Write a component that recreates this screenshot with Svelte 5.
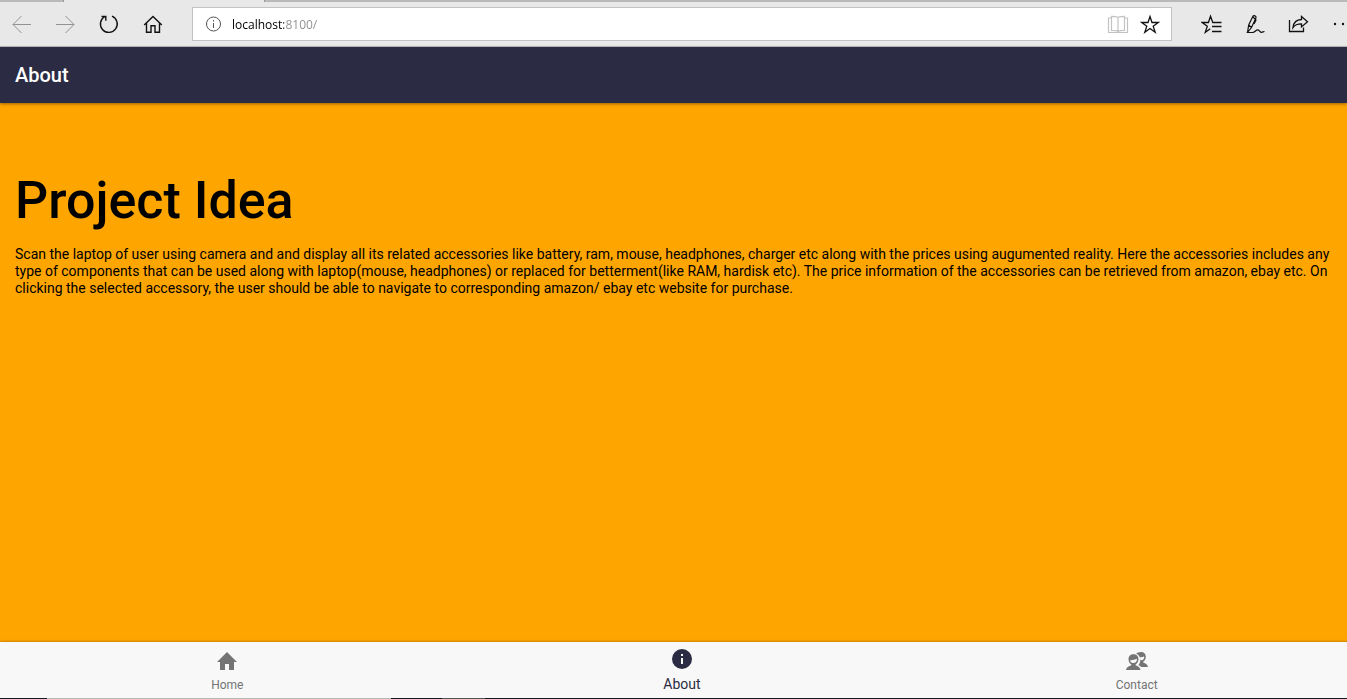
<script>
  let active = $state('About');
  let address = $state('localhost:8100/');
  const tabs = ['Home', 'About', 'Contact'];
</script>

<div class="window">
  <div class="tabstrip"><span class="inactive first"></span><span class="current"></span><span class="inactive rest"></span></div>
  <div class="toolbar">
    <nav class="controls" aria-label="Browser navigation">
      <button class="tool" aria-label="Back" disabled>
        <svg width="22" height="22" viewBox="0 0 22 22" stroke="#929292"><path d="M20 11.500H2M10.500 3 2 11.500 10.500 20" /></svg>
      </button>
      <button class="tool" aria-label="Forward" disabled>
        <svg width="22" height="22" viewBox="0 0 22 22" stroke="#929292"><path d="M1 11.500h18M10.500 3 19 11.500 10.500 20" /></svg>
      </button>
      <button class="tool" aria-label="Refresh">
        <svg width="22" height="22" viewBox="0 0 22 22" stroke="#111" stroke-width="1.400"><path d="M13 3.200a8.400 8.400 0 1 1-7 .3M2.500 3.500h4.300v4.300" /></svg>
      </button>
      <button class="tool" aria-label="Home page">
        <svg width="22" height="22" viewBox="0 0 22 22" stroke="#111" stroke-width="1.400"><path d="m1.200 12 8.800-8.500 8.800 8.500M3.500 10v9.300H8v-6.500h4v6.500h4.500V10" /></svg>
      </button>
    </nav>

    <div class="address">
      <svg width="16" height="16" viewBox="0 0 16 16" stroke="#555"><circle cx="7.500" cy="8" r="7" /><path d="M7.500 7v5M7.500 4v1.500" /></svg>
      <input aria-label="Address" bind:value={address} spellcheck="false" />
      <button class="mini" aria-label="Reading view" disabled>
        <svg width="22" height="22" viewBox="0 0 22 22" stroke="#c3c3c3" stroke-width="1.200"><path d="M11 4.500C9.500 3.300 7 3.300 4.500 3.300v14c2.500 0 5 0 6.500 1.200 1.500-1.200 4-1.200 6.500-1.200v-14c-2.500 0-5 0-6.500 1.200zm0 0v14M4.500 5h-3v14.500h19V5h-3" /></svg>
      </button>
      <button class="mini" aria-label="Add to favorites">
        <svg width="22" height="22" viewBox="0 0 22 22" stroke="#111" stroke-width="1.300"><path d="m11 3.500 2 6h6.300l-5.100 3.700 2 6.100-5.200-3.800-5.200 3.800 2-6.100-5.100-3.700H9z" /></svg>
      </button>
    </div>

    <div class="actions">
      <button class="tool" aria-label="Favorites hub">
        <svg width="22" height="22" viewBox="0 0 22 22" stroke="#111" stroke-width="1.300"><path d="M13 9.500h-1.200L9.500 3.300 7.400 9.500H1.200l5.100 3.800-2 6 5-3.500M12 9.500h8.500M11 13.500h9.500M11 18.500h9.500" /></svg>
      </button>
      <button class="tool" aria-label="Make a web note">
        <svg width="22" height="22" viewBox="0 0 22 22" stroke="#111" stroke-width="1.200"><path d="M3.500 19.500 4.700 12 8.700 3.700c1-2 4-.6 3.200 1.400L7.500 14.500 3.500 19.500h5c2.800 0 3.200-3 5.500-2.700 1.800.3 1.500 2.500 3.600 2.500 1.300 0 1.600-.8 2.900-.8M4.700 12 7.500 14.500M9 4l3 3-2 4" /></svg>
      </button>
      <button class="tool" aria-label="Share">
        <svg width="22" height="22" viewBox="0 0 22 22" stroke="#111" stroke-width="1.300"><path d="M2.500 7v11.500h14v-4M14.500 3.500l6 5.200-6 5.200v-3c-4 0-6.500.8-8.500 3.600.5-4.700 3.500-7.800 8.500-8z" /></svg>
      </button>
      <button class="tool" aria-label="More">
        <svg width="22" height="22" viewBox="0 0 22 22"><g fill="#111"><circle cx="5" cy="11" r="1.200" /><circle cx="13" cy="11" r="1.200" /><circle cx="21" cy="11" r="1.200" /></g></svg>
      </button>
    </div>
  </div>

  <header><h2>About</h2></header>

  <main>
    <h1>Project Idea</h1>
    <p>Scan the laptop of user using camera and and display all its related accessories like battery, ram, mouse, headphones, charger etc along with the prices using augumented reality. Here the accessories includes any type of components that can be used along with laptop(mouse, headphones) or replaced for betterment(like RAM, hardisk etc). The price information of the accessories can be retrieved from amazon, ebay etc. On clicking the selected accessory, the user should be able to navigate to corresponding amazon/ ebay etc website for purchase.</p>
  </main>

  <nav class="tabs" aria-label="Pages">
    {#each tabs as tab}
      <button class="tab" class:active={active === tab} onclick={() => (active = tab)}>
        <svg class="glyph" width="24" height="24" viewBox="0 0 24 24" aria-hidden="true">
          {#if tab === 'Home'}
            <path d="M10 21v-6h4v6h5v-8h3L12 3 2 13h3v8z" />
          {:else if tab === 'About'}
            <path fill-rule="evenodd" d="M12 2a10 10 0 1 0 0 20 10 10 0 0 0 0-20zm1 15h-2v-6h2zm0-8h-2V7h2z" />
          {:else}
            <path d="M16 3c2.800 0 4.800 2 4.800 4.700 0 2.300-1 4-2.600 5v.8c1.700.8 4.100 1.300 4.800 4.500h-7c-.7-1-1.500-1.500-2.700-2 1.200-1 2-2.500 2-5.500 0-2.600-1.700-5-4.200-5.700C12.200 3.700 13.600 3 16 3z" />
            <path d="M8.500 5.200c-2.900 0-5 2-5 4.900 0 2.500 1.100 4.400 2.800 5.400v.8C4.500 17.200 1.700 17.700 1 21h14.500c-.7-3.300-3.100-3.800-4.900-4.700v-.8c1.700-1 2.900-2.900 2.900-5.400 0-2.900-2.100-4.900-5-4.900z" />
            <path class="face" d="M5 11.200c2.600.2 5-.4 6.600-1.400l.4 1.300c-.4 1.900-1.700 3-3.500 3S5.300 13 5 11.200zM15 8.300c1.700.1 3-.2 4-.8l.3 1c-.4 1.600-1.300 2.600-2.700 2.800-.7 0-1.200-.3-1.500-.8z" />
          {/if}
        </svg>
        <span>{tab}</span>
      </button>
    {/each}
  </nav>
  <div class="taskbar"><span class="search"></span><span class="lit"></span></div>
</div>

<style>
  .window {
    display: flex;
    flex-direction: column;
    height: 100vh;
    overflow: hidden;
    font-family: Roboto, sans-serif;
    color: #000;
  }
  button {
    border: 0;
    padding: 0;
    background: none;
    font: inherit;
    color: inherit;
  }
  svg { display: block; flex: none; fill: none; }
  .tabstrip { display: flex; flex: none; height: 2px; background: #e8e8e8; }
  .inactive { background: #b9b9b9; }
  .first { width: 63px; border-right: 1px solid #999; }
  .current { width: 200px; }
  .rest { flex: 1; border-left: 1px solid #999; }
  .toolbar {
    display: flex;
    flex: none;
    align-items: center;
    height: 44px;
    background: #e8e8e8;
    border-bottom: 1px solid #bfbfbf;
  }
  .controls, .actions { display: flex; flex: none; }
  .controls { width: 192px; }
  .tool { display: flex; flex: none; justify-content: center; width: 44px; }
  .actions { width: 175px; padding-left: 18px; box-sizing: border-box; }
  .actions .tool { width: 43px; }
  .address {
    display: flex;
    flex: 1;
    align-items: center;
    gap: 10px;
    height: 32px;
    min-width: 0;
    padding: 0 10px 0 13px;
    background: #fff;
    border: 1px solid #c3c3c3;
  }
  input {
    flex: 1;
    min-width: 0;
    height: 24px;
    padding: 0;
    border: 0;
    outline: 0;
    font: 12px "Open Sans", sans-serif;
    background: linear-gradient(90deg, #000 52px, #8c8c8c 52px);
    background-clip: text;
    -webkit-text-fill-color: transparent;
    caret-color: #000;
  }
  header {
    position: relative;
    display: flex;
    flex: none;
    align-items: center;
    height: 56px;
    padding: 0 15px;
    background: #2b2c43;
    color: #fff;
    box-shadow: 0 1px 3px #0006;
  }
  h2 { margin: 0; font-size: 20px; font-weight: 500; line-height: 24px; }
  main { flex: 1; min-height: 0; padding: 66px 15px 16px; background: #ffa500; }
  h1 { margin: 0 0 14px; font-size: 52px; font-weight: 500; line-height: 63px; }
  p { margin: 0; font-size: 14px; line-height: 17px; }
  .tabs {
    position: relative;
    display: flex;
    flex: none;
    height: 56px;
    margin-right: -17px;
    background: #f8f8f8;
    box-shadow: 0 -1px 2px #0003;
  }
  .tab {
    display: flex;
    flex: 1;
    flex-direction: column;
    align-items: center;
    justify-content: flex-end;
    gap: 5px;
    padding-bottom: 6px;
    font-size: 12px;
    line-height: 14px;
    color: #747474;
  }
  .tab.active { font-size: 14px; line-height: 16px; color: #2b2c43; }
  .glyph { fill: currentColor; }
  .face { fill: #f8f8f8; }
  .taskbar { display: flex; flex: none; height: 1px; padding-left: 47px; background: #151722; }
  .search { width: 344px; background: #bbb; }
  .lit { width: 43px; margin-left: 51px; background: #555; }
</style>
